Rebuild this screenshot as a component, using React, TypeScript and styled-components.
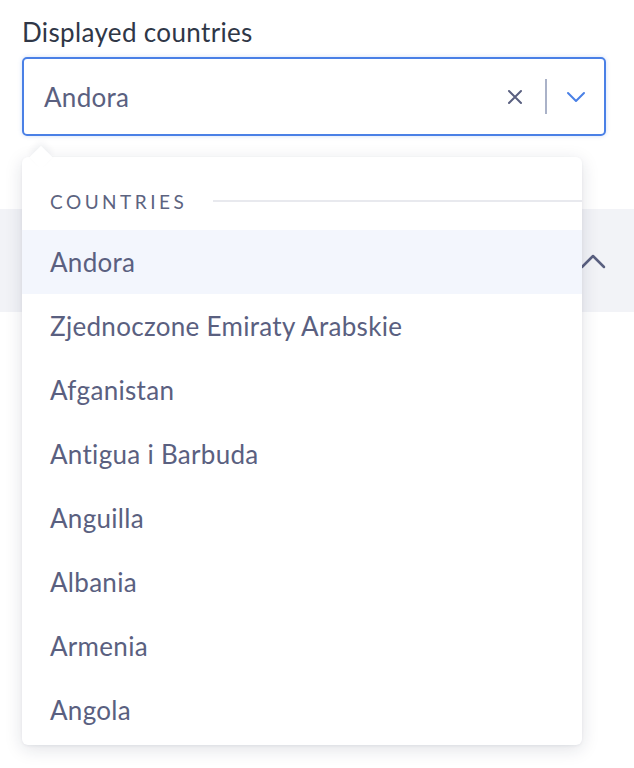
import React from "react";
import styled, { createGlobalStyle } from "styled-components";

const Global = createGlobalStyle`
  html, body { margin: 0; padding: 0; background: #ffffff; }
  body { font-family: "Lato", "Noto Sans", sans-serif; }
`;

const Page = styled.div`
  position: relative;
  width: 634px;
  height: 768px;
  overflow: hidden;
`;

const Field = styled.div`
  padding: 16px 28px 0 22px;
  display: flex;
  flex-direction: column;
`;

const Label = styled.label`
  font-size: 26px;
  line-height: 32px;
  letter-spacing: 0.35px;
  color: #2f3747;
  margin-bottom: 9px;
`;

const Control = styled.div`
  height: 79px;
  box-sizing: border-box;
  border: 2px solid #4a80e6;
  border-radius: 5px;
  display: flex;
  align-items: center;
  padding-left: 20px;
  box-shadow: 0 0 4px rgba(74, 128, 230, 0.25);
`;

const Value = styled.span`
  flex: 1;
  font-size: 26px;
  letter-spacing: 0.3px;
  color: #5a6080;
`;

const Indicators = styled.div`
  display: flex;
  align-items: center;
  height: 100%;
`;

const IconSlot = styled.div<{ $w: number }>`
  width: ${(p) => p.$w}px;
  display: flex;
  align-items: center;
  justify-content: center;
`;

const Separator = styled.div`
  width: 2px;
  height: 35px;
  background: #aab2c8;
`;

const Band = styled.div`
  margin-top: 73px;
  height: 103px;
  background: #f2f3f7;
  display: flex;
  align-items: center;
  justify-content: flex-end;
  padding-right: 28px;
`;

const Menu = styled.div`
  position: absolute;
  left: 22px;
  top: 157px;
  width: 560px;
  height: 588px;
  background: #ffffff;
  border-radius: 6px;
  box-shadow: 0 4px 18px rgba(20, 30, 60, 0.13), 0 1px 3px rgba(20, 30, 60, 0.06);
  display: flex;
  flex-direction: column;
`;

const Pointer = styled.div`
  position: absolute;
  left: 11px;
  top: -8px;
  width: 16px;
  height: 16px;
  background: #ffffff;
  transform: rotate(45deg);
  box-shadow: -3px -3px 6px rgba(20, 30, 60, 0.06);
`;

const GroupHeader = styled.div`
  position: relative;
  height: 73px;
  display: flex;
  align-items: center;
  padding-left: 28px;
  padding-top: 15px;
  box-sizing: border-box;
  gap: 26px;
`;

const GroupTitle = styled.span`
  font-size: 19px;
  letter-spacing: 3.5px;
  color: #5c6380;
  text-transform: uppercase;
`;

const GroupLine = styled.div`
  flex: 1;
  height: 2px;
  background: #e8e9ee;
`;

const Option = styled.div<{ $active?: boolean }>`
  height: 64px;
  flex-shrink: 0;
  display: flex;
  align-items: center;
  padding-left: 28px;
  font-size: 26px;
  letter-spacing: 0.3px;
  color: #5a6080;
  background: ${(p) => (p.$active ? "#f3f6fd" : "transparent")};
`;

const countries = [
  "Andora",
  "Zjednoczone Emiraty Arabskie",
  "Afganistan",
  "Antigua i Barbuda",
  "Anguilla",
  "Albania",
  "Armenia",
  "Angola",
];

export default function App() {
  return (
    <Page>
      <Global />
      <Field>
        <Label>Displayed countries</Label>
        <Control>
          <Value>Andora</Value>
          <Indicators>
            <IconSlot $w={60}>
              <svg width="16" height="16" viewBox="0 0 16 16">
                <path d="M2 2 L14 14 M14 2 L2 14" stroke="#5a6080" strokeWidth="2" strokeLinecap="round" fill="none" />
              </svg>
            </IconSlot>
            <Separator />
            <IconSlot $w={57}>
              <svg width="20" height="12" viewBox="0 0 20 12">
                <path d="M2 2 L10 10 L18 2" stroke="#4a80e6" strokeWidth="2" strokeLinecap="round" strokeLinejoin="round" fill="none" />
              </svg>
            </IconSlot>
          </Indicators>
        </Control>
      </Field>
      <Band>
        <svg width="26" height="16" viewBox="0 0 26 16">
          <path d="M2 14 L13 3 L24 14" stroke="#5a6080" strokeWidth="2.5" strokeLinecap="round" strokeLinejoin="round" fill="none" />
        </svg>
      </Band>
      <Menu>
        <Pointer />
        <GroupHeader>
          <GroupTitle>Countries</GroupTitle>
          <GroupLine />
        </GroupHeader>
        {countries.map((c, i) => (
          <Option key={c} $active={i === 0}>
            {c}
          </Option>
        ))}
      </Menu>
    </Page>
  );
}
